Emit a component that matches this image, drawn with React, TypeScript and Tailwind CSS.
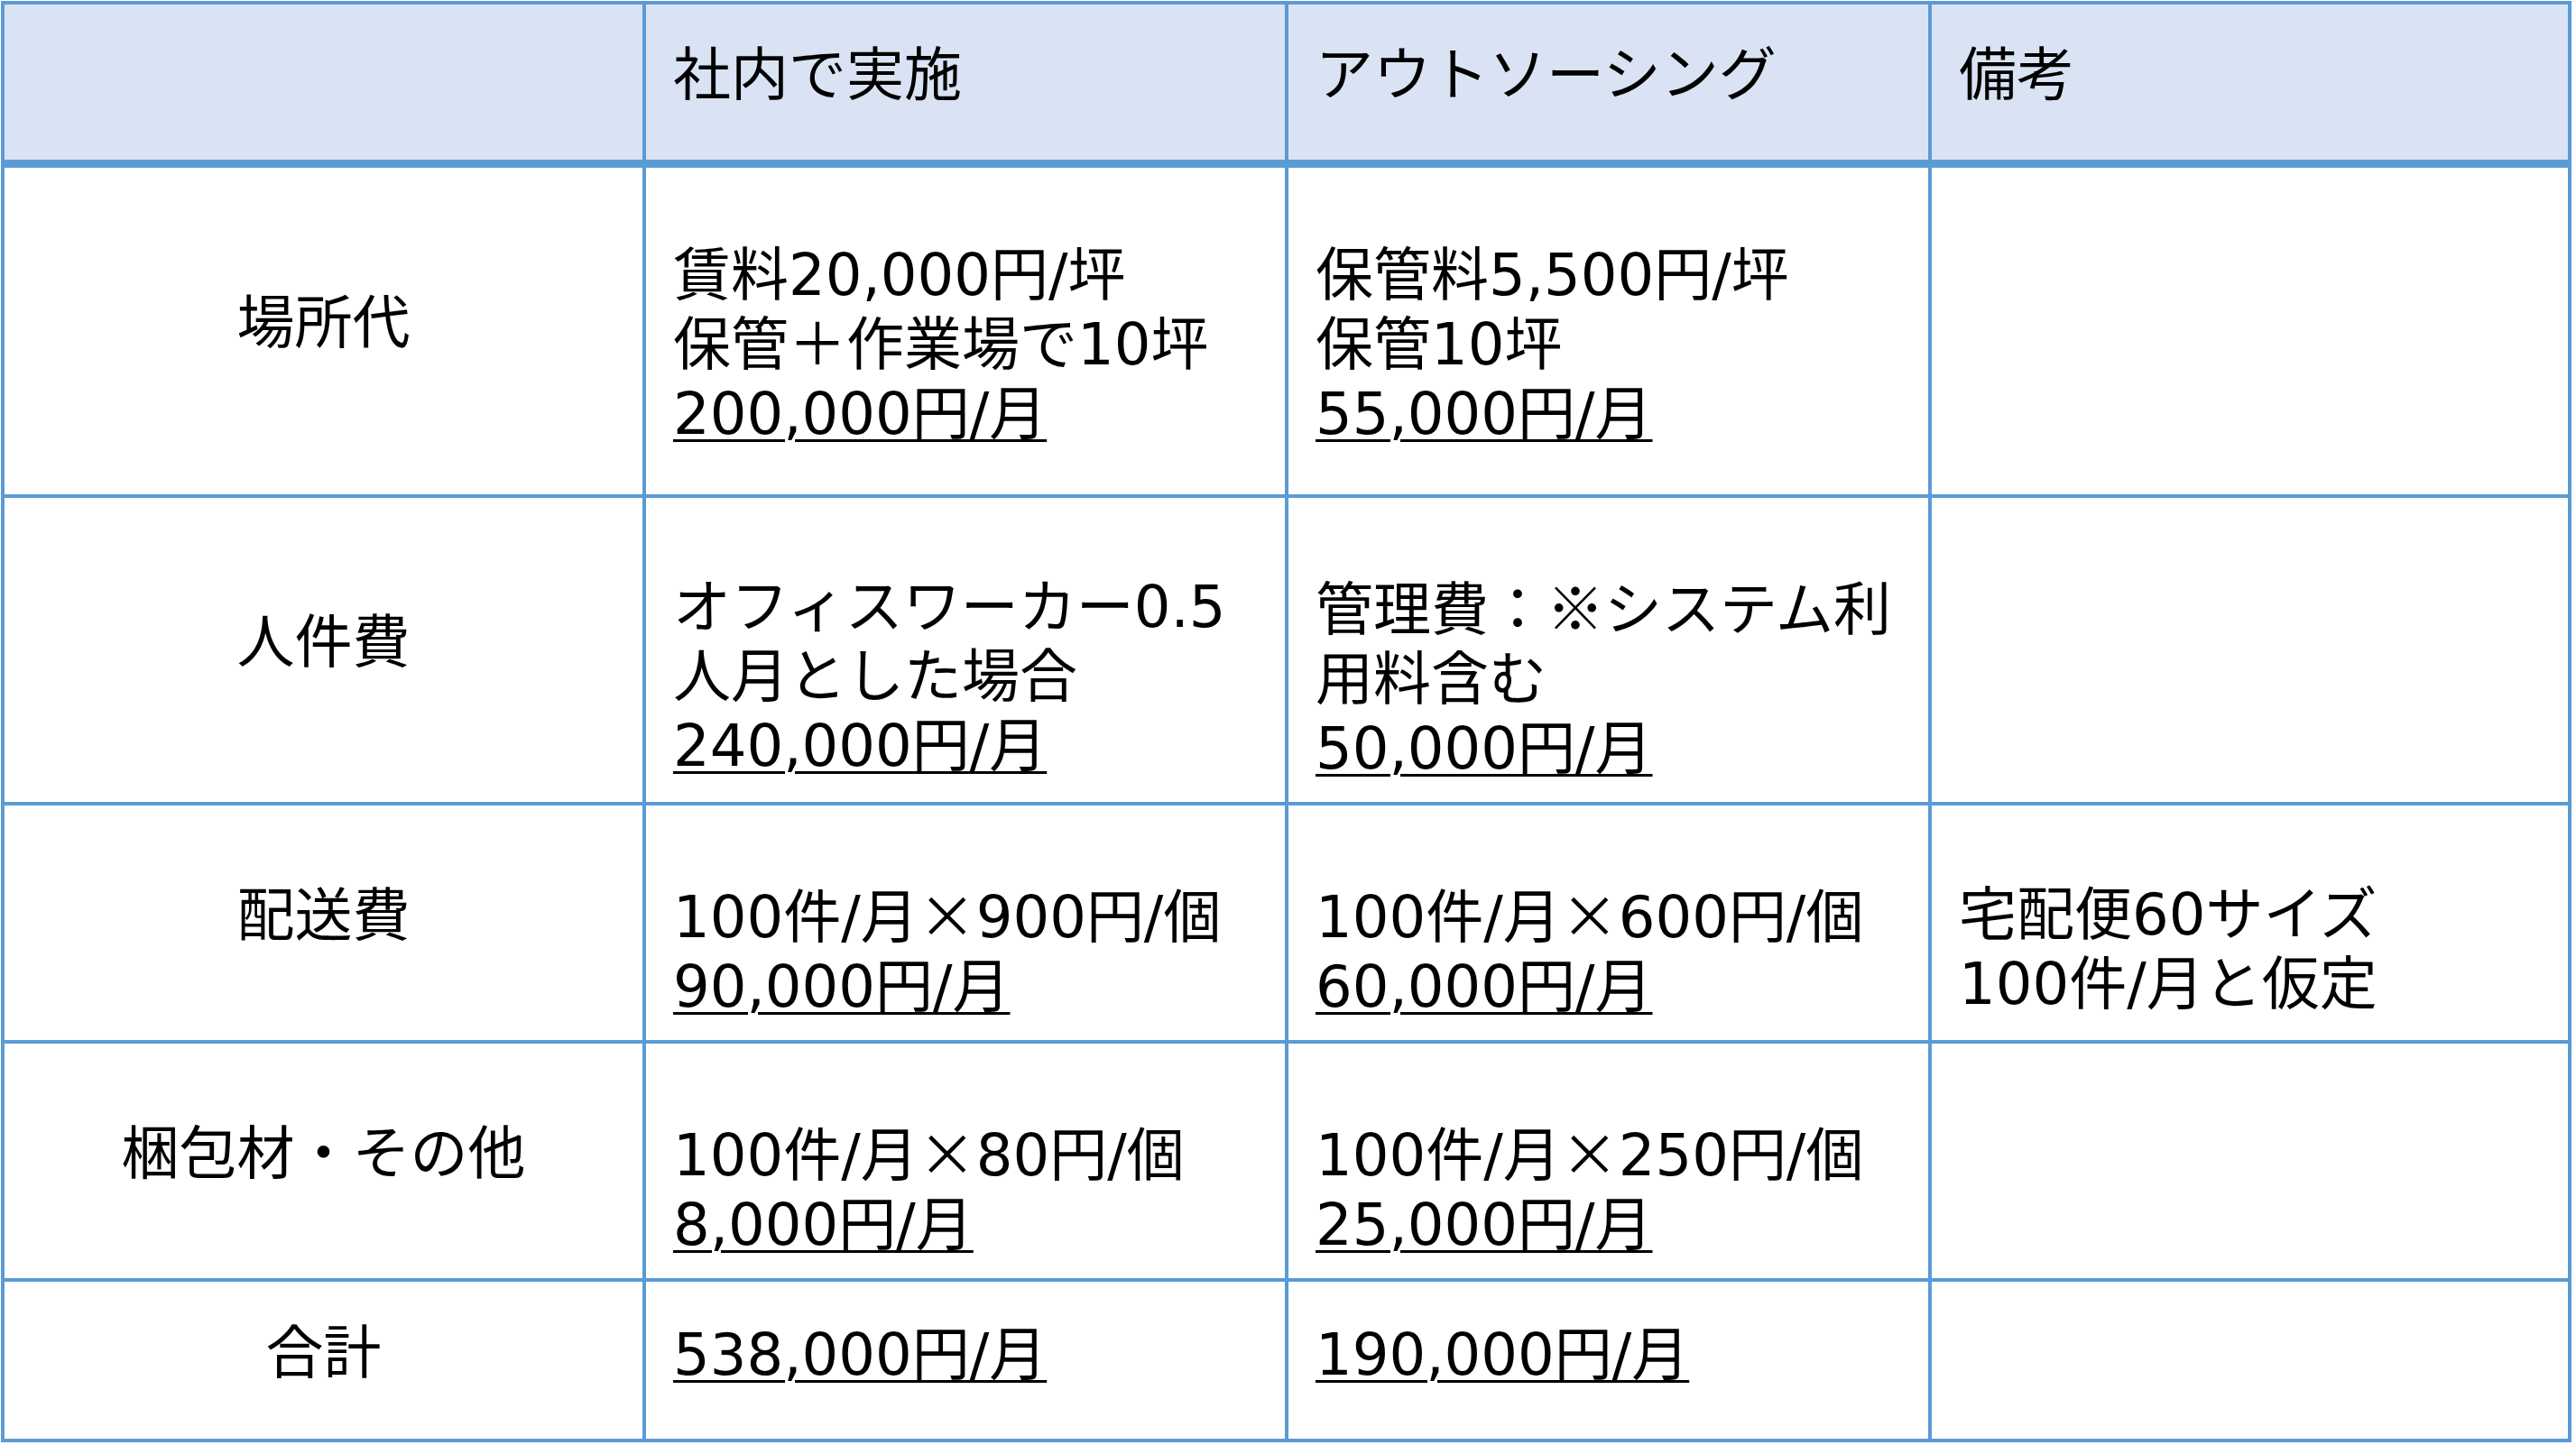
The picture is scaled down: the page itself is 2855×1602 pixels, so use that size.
import React from "react";

const FONT = "font-['DejaVu_Sans','Noto_Sans_CJK_JP',sans-serif]";

function Times() {
  return (
    <span className="inline-block w-[64px] text-center font-['Noto_Sans_CJK_JP',sans-serif]">×</span>
  );
}

function U({ children }: { children: React.ReactNode }) {
  return (
    <span className="underline decoration-[3px] underline-offset-[6px]">{children}</span>
  );
}

type Row = {
  h: string;
  label: string;
  labelPad: string;
  dataPad: string;
  a: React.ReactNode[];
  b: React.ReactNode[];
  c: React.ReactNode[];
};

const rows: Row[] = [
  {
    h: "h-[362px]",
    label: "場所代",
    labelPad: "pb-[18px]",
    dataPad: "pt-[30px]",
    a: ["賃料20,000円/坪", "保管＋作業場で10坪", <U key="u">200,000円/月</U>],
    b: ["保管料5,500円/坪", "保管10坪", <U key="u">55,000円/月</U>],
    c: [],
  },
  {
    h: "h-[337px]",
    label: "人件費",
    labelPad: "pb-[16px]",
    dataPad: "pt-[60px]",
    a: ["オフィスワーカー0.5", "人月とした場合", <U key="u">240,000円/月</U>],
    b: [
      <span key="s">
        管理費：<span className="font-['Noto_Sans_CJK_JP',sans-serif]">※</span>システム利
      </span>,
      "用料含む",
      <U key="u">50,000円/月</U>,
    ],
    c: [],
  },
  {
    h: "h-[260px]",
    label: "配送費",
    labelPad: "pb-[16px]",
    dataPad: "pt-[60px]",
    a: [
      <span key="s">
        100件/月<Times />900円/個
      </span>,
      <U key="u">90,000円/月</U>,
    ],
    b: [
      <span key="s">
        100件/月<Times />600円/個
      </span>,
      <U key="u">60,000円/月</U>,
    ],
    c: ["宅配便60サイズ", "100件/月と仮定"],
  },
  {
    h: "h-[260px]",
    label: "梱包材・その他",
    labelPad: "pb-[16px]",
    dataPad: "pt-[60px]",
    a: [
      <span key="s">
        100件/月<Times />80円/個
      </span>,
      <U key="u">8,000円/月</U>,
    ],
    b: [
      <span key="s">
        100件/月<Times />250円/個
      </span>,
      <U key="u">25,000円/月</U>,
    ],
    c: [],
  },
  {
    h: "h-[174px]",
    label: "合計",
    labelPad: "pb-[16px]",
    dataPad: "pb-[12px]",
    a: [<U key="u">538,000円/月</U>],
    b: [<U key="u">190,000円/月</U>],
    c: [],
  },
];

function Lines({ lines }: { lines: React.ReactNode[] }) {
  return (
    <>
      {lines.map((l, i) => (
        <div key={i} className="whitespace-nowrap">
          {l}
        </div>
      ))}
    </>
  );
}

export default function App() {
  const grid = "grid grid-cols-[707px_708px_709px_705px] gap-x-[4px]";
  return (
    <div className={`w-[2855px] h-[1602px] bg-white pl-[1px] pt-[1px] text-black text-[64px] leading-[77px] ${FONT}`}>
      <div className="w-[2849px] bg-[#5b9bd5] p-[4px] flex flex-col gap-[4px]">
        <div className={`${grid} h-[172px] mb-[5px]`}>
          <div className="bg-[#dae3f3]" />
          <div className="bg-[#dae3f3] flex flex-col justify-center pl-[30px] pb-[15px] whitespace-nowrap">社内で実施</div>
          <div className="bg-[#dae3f3] flex flex-col justify-center pl-[30px] pb-[15px] whitespace-nowrap">アウトソーシング</div>
          <div className="bg-[#dae3f3] flex flex-col justify-center pl-[30px] pb-[15px] whitespace-nowrap">備考</div>
        </div>
        {rows.map((r, i) => (
          <div key={i} className={`${grid} ${r.h}`}>
            <div className={`bg-white flex flex-col justify-center items-center text-center ${r.labelPad} whitespace-nowrap`}>
              {r.label}
            </div>
            <div className={`bg-white flex flex-col justify-center pl-[30px] ${r.dataPad}`}>
              <Lines lines={r.a} />
            </div>
            <div className={`bg-white flex flex-col justify-center pl-[30px] ${r.dataPad}`}>
              <Lines lines={r.b} />
            </div>
            <div className={`bg-white flex flex-col justify-center pl-[30px] ${r.dataPad}`}>
              <Lines lines={r.c} />
            </div>
          </div>
        ))}
      </div>
    </div>
  );
}
